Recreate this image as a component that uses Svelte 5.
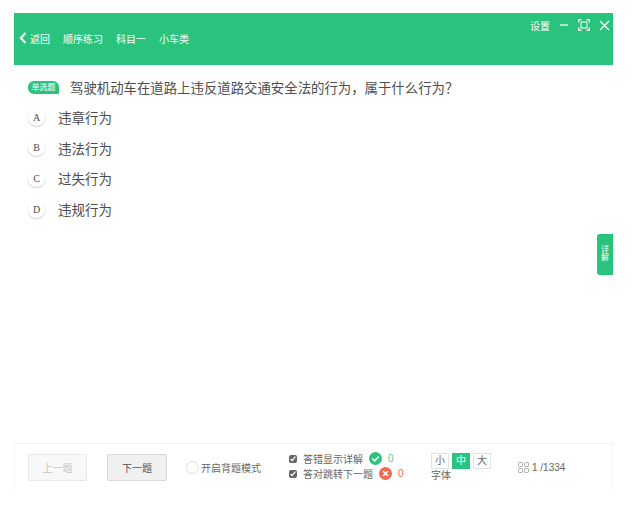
<script>
  const options = [
    { key: 'A', text: '违章行为' },
    { key: 'B', text: '违法行为' },
    { key: 'C', text: '过失行为' },
    { key: 'D', text: '违规行为' },
  ];
  const sizes = ['小', '中', '大'];
  const navItems = ['顺序练习', '科目一', '小车类'];
</script>

<div class="page">
  <header class="top">
    <nav class="nav">
      <svg class="back-icon" width="8" height="12" viewBox="0 0 8 12">
        <path d="M6.5 1 L1.8 6 L6.5 11" fill="none" stroke="#fff" stroke-width="2" />
      </svg>
      <span class="back">返回</span>
      {#each navItems as item}
        <span>{item}</span>
      {/each}
    </nav>
    <div class="tools">
      <span>设置</span>
      <svg width="10" height="10" viewBox="0 0 10 10"><path d="M1 5 H9" stroke="#fff" stroke-width="1.2" /></svg>
      <svg width="12" height="12" viewBox="0 0 12 12" fill="none" stroke="#fff">
        <path d="M0.7 3.5 V0.7 H3.5 M8.5 0.7 H11.3 V3.5 M11.3 8.5 V11.3 H8.5 M3.5 11.3 H0.7 V8.5" stroke-width="1.3" />
        <rect x="3" y="3" width="6" height="6" stroke-width="1" />
      </svg>
      <svg width="11" height="11" viewBox="0 0 11 11"><path d="M1 1 L10 10 M10 1 L1 10" stroke="#fff" stroke-width="1.4" /></svg>
    </div>
  </header>

  <main class="content">
    <div class="question">
      <span class="tag">单选题</span>
      <span>驾驶机动车在道路上违反道路交通安全法的行为，属于什么行为？</span>
    </div>
    <ul class="options">
      {#each options as opt}
        <li>
          <span class="letter">{opt.key}</span>
          <span>{opt.text}</span>
        </li>
      {/each}
    </ul>
    <div class="detail-tab">详解</div>
  </main>

  <footer class="bottom">
    <button class="btn prev">上一题</button>
    <button class="btn next">下一题</button>
    <label class="recite"><span class="radio"></span>开启背题模式</label>
    <div class="checks">
      <div class="check-row">
        <input type="checkbox" checked />
        <span>答错显示详解</span>
        <svg class="stat-icon" width="13" height="13" viewBox="0 0 13 13">
          <circle cx="6.5" cy="6.5" r="6.5" fill="#29c37d" />
          <path d="M3.3 6.6 L5.6 8.9 L9.8 4.6" fill="none" stroke="#fff" stroke-width="1.7" />
        </svg>
        <span class="count ok">0</span>
      </div>
      <div class="check-row">
        <input type="checkbox" checked />
        <span>答对跳转下一题</span>
        <svg class="stat-icon" width="13" height="13" viewBox="0 0 13 13">
          <circle cx="6.5" cy="6.5" r="6.5" fill="#ee6a50" />
          <path d="M4 4 L9 9 M9 4 L4 9" fill="none" stroke="#fff" stroke-width="1.6" />
        </svg>
        <span class="count bad">0</span>
      </div>
    </div>
    <div class="font-size">
      <div class="sizes">
        {#each sizes as s}
          <span class="size" class:active={s === '中'}>{s}</span>
        {/each}
      </div>
      <span class="font-label">字体</span>
    </div>
    <div class="progress">
      <svg width="11" height="11" viewBox="0 0 11 11" fill="none" stroke="#aaa" stroke-width="1">
        <rect x="0.5" y="0.5" width="4" height="4" rx="0.8" />
        <rect x="6.5" y="0.5" width="4" height="4" rx="0.8" />
        <rect x="0.5" y="6.5" width="4" height="4" rx="0.8" />
        <rect x="6.5" y="6.5" width="4" height="4" rx="0.8" />
      </svg>
      <span>1 /1334</span>
    </div>
  </footer>
</div>

<style>
  :global(body) {
    background: #fff;
  }

  .page {
    width: 599px;
    height: 477px;
    margin-left: 14px;
    padding-top: 13px;
    display: flex;
    flex-direction: column;
    font-family: "Liberation Sans", "Noto Sans CJK SC", sans-serif;
    color: #555;
  }

  .top {
    height: 52px;
    flex: none;
    background: #29c37d;
    color: #fff;
    display: flex;
    justify-content: space-between;
    font-size: 10px;
  }

  .nav {
    display: flex;
    align-items: center;
    height: 50px;
    padding-left: 5px;
    gap: 13px;
  }

  .back-icon {
    margin-right: -10px;
  }

  .tools {
    display: flex;
    align-items: center;
    align-self: flex-start;
    height: 24px;
    padding-right: 3px;
    gap: 9px;
  }

  .content {
    flex: 1;
    position: relative;
    padding: 13px 0 0 14px;
  }

  .question {
    display: flex;
    align-items: center;
    gap: 11px;
    height: 18px;
    font-size: 13.4px;
    color: #4d4d4d;
  }

  .tag {
    width: 31px;
    height: 13px;
    line-height: 13px;
    border-radius: 6px 6px 1px 6px;
    background: #29c37d;
    color: #fff;
    font-size: 8px;
    text-align: center;
  }

  .options {
    list-style: none;
    margin: 0;
    padding: 6px 0 0;
  }

  .options li {
    height: 30.6px;
    display: flex;
    align-items: center;
    gap: 13px;
    font-size: 13.5px;
    color: #4d4d4d;
  }

  .letter {
    width: 17px;
    height: 17px;
    border-radius: 50%;
    background: #fff;
    box-shadow: 0 1px 2px rgba(0, 0, 0, 0.2);
    font-family: "Liberation Serif", serif;
    font-size: 10px;
    line-height: 17px;
    text-align: center;
  }

  .detail-tab {
    position: absolute;
    right: 0;
    top: 169px;
    width: 16px;
    height: 41px;
    box-sizing: border-box;
    padding: 12px 4px 0;
    border-radius: 3px 0 0 3px;
    background: #29c37d;
    color: #fff;
    font-size: 8px;
    line-height: 8px;
    text-align: center;
  }

  .bottom {
    height: 47px;
    flex: none;
    box-sizing: border-box;
    border: 1px solid #f4f4f4;
    border-bottom: none;
    display: flex;
    align-items: center;
    padding: 0 0 0 13px;
    font-size: 10px;
    color: #666;
  }

  .btn {
    height: 27px;
    padding: 0;
    border-radius: 2px;
    font-family: inherit;
    font-size: 10px;
  }

  .prev {
    width: 59px;
    border: 1px solid #e8e8e8;
    background: #f8f8f8;
    color: #c4c4c4;
  }

  .next {
    width: 60px;
    margin-left: 20px;
    border: 1px solid #d8d8d8;
    background: #f0f0f0;
    color: #555;
  }

  .recite {
    display: flex;
    align-items: center;
    margin-left: 19px;
    gap: 2px;
    width: 103px;
  }

  .radio {
    width: 11px;
    height: 11px;
    border: 1px solid #ddd;
    border-radius: 50%;
  }

  .checks {
    width: 142px;
    display: flex;
    flex-direction: column;
    gap: 1px;
    margin-top: -2px;
  }

  .check-row {
    height: 14px;
    display: flex;
    align-items: center;
  }

  .check-row input {
    width: 8px;
    height: 8px;
    margin: 0 6px 0 0;
    accent-color: #666;
  }

  .stat-icon {
    margin-left: 6px;
  }

  .count {
    margin-left: 6px;
  }

  .ok {
    color: #5fc98f;
  }

  .bad {
    color: #ee6a50;
  }

  .font-size {
    width: 87px;
    display: flex;
    flex-direction: column;
    gap: 1px;
    margin-top: 1px;
  }

  .sizes {
    display: flex;
    gap: 3px;
  }

  .size {
    width: 18px;
    height: 16px;
    box-sizing: border-box;
    border: 1px solid #e2e2e2;
    line-height: 14px;
    text-align: center;
  }

  .size.active {
    background: #29c37d;
    border-color: #29c37d;
    color: #fff;
  }

  .font-label {
    line-height: 12px;
  }

  .progress {
    display: flex;
    align-items: center;
    gap: 3px;
    color: #666;
  }
</style>
